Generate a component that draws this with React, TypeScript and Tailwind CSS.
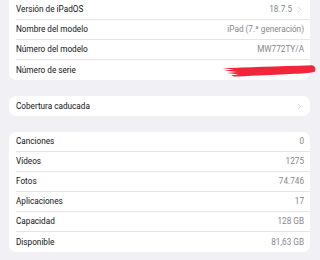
import { ChevronRight } from "lucide-react";

type Row = { label: string; value?: string; chevron?: boolean; redacted?: boolean };

const device: Row[] = [
  { label: "Versión de iPadOS", value: "18.7.5", chevron: true },
  { label: "Nombre del modelo", value: "iPad (7.ª generación)" },
  { label: "Número del modelo", value: "MW772TY/A" },
  { label: "Número de serie", redacted: true },
];

const usage: Row[] = [
  { label: "Canciones", value: "0" },
  { label: "Vídeos", value: "1275" },
  { label: "Fotos", value: "74.746" },
  { label: "Aplicaciones", value: "17" },
  { label: "Capacidad", value: "128 GB" },
  { label: "Disponible", value: "81,63 GB" },
];

// red marker stroke hiding the serial number
function Scribble() {
  return (
    <svg width="94" height="12" viewBox="0 0 94 12" className="absolute right-[-6px] top-[5px]">
      <path
        d="M0 3.2 C 25 2.4, 55 1.2, 90 0.2 C 93.5 1, 94 4, 93 6.5 C 90 8.2, 70 9.2, 36 10.4 C 26 10.9, 18 11.3, 12 11.6 L 9 10.3 L 17 9.4 L 5 8 L 15 7 L 2 5.4 L 12 4.4 Z"
        fill="#f0263a"
      />
    </svg>
  );
}

function ListRow({ row, last }: { row: Row; last: boolean }) {
  return (
    <div className="pl-[7px] h-[20px]">
      <div
        className={`relative flex items-center justify-between h-full pr-[6px] ${
          last ? "" : "border-b border-[#e6e6ea]"
        }`}
      >
        <span className="text-[#111113]">{row.label}</span>
        {row.redacted ? (
          <Scribble />
        ) : (
          <span className="flex items-center gap-[3px] text-[#86868b]">
            {row.value}
            {row.chevron && <ChevronRight size={9} strokeWidth={1.8} className="text-[#c2c2c6]" />}
          </span>
        )}
      </div>
    </div>
  );
}

export default function App() {
  return (
    <div
      className="w-[320px] h-[260px] overflow-hidden bg-[#f0f0f5] pl-[9px] pr-[10px] text-[8.2px] leading-none"
      style={{ fontFamily: "Roboto, 'Liberation Sans', sans-serif" }}
    >
      <div className="bg-white rounded-b-[7px]">
        {device.map((r, i) => (
          <ListRow key={r.label} row={r} last={i === device.length - 1} />
        ))}
      </div>

      <div className="mt-[16px] bg-white rounded-[7px] h-[20px] pl-[7px] pr-[6px] flex items-center justify-between">
        <span className="text-[#111113]">Cobertura caducada</span>
        <ChevronRight size={9} strokeWidth={1.8} className="text-[#c2c2c6]" />
      </div>

      <div className="mt-[16px] bg-white rounded-[7px]">
        {usage.map((r, i) => (
          <ListRow key={r.label} row={r} last={i === usage.length - 1} />
        ))}
      </div>
    </div>
  );
}
